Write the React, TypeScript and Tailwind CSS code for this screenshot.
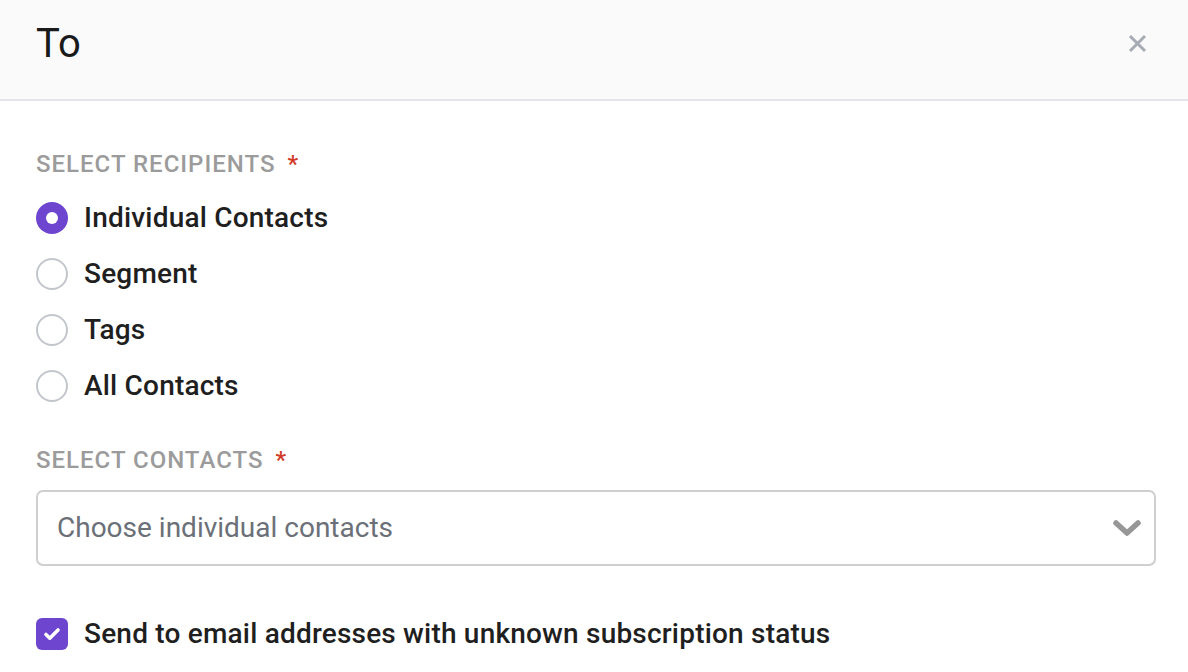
import { useState } from 'react';

const options = ['Individual Contacts', 'Segment', 'Tags', 'All Contacts'];

function FieldLabel({ text }: { text: string }) {
  return (
    <p className="text-[24px] leading-none font-medium tracking-[1px] text-[#9b9b9b] uppercase">
      {text}
      <span className="ml-[12px] text-[#d23a26]">*</span>
    </p>
  );
}

export default function App() {
  const [selected, setSelected] = useState(0);
  const [unknown, setUnknown] = useState(true);

  return (
    <div className="w-[1188px] h-[672px] bg-white font-['Roboto',sans-serif] overflow-hidden">
      {/* header */}
      <div className="h-[101px] bg-[#fafafa] border-b-2 border-[#e6e6ea] flex items-center justify-between pl-[36px] pr-[41px]">
        <h1 className="text-[40px] text-[#1a1a1a] leading-none pb-[12px]">To</h1>
        <button className="text-[#a7abb3] pb-[12px]">
          <svg width="19" height="19" viewBox="0 0 19 19" fill="none" stroke="currentColor" strokeWidth="3" strokeLinecap="butt">
            <path d="M2 2l15 15M17 2L2 17" />
          </svg>
        </button>
      </div>

      <div className="px-[36px] pt-[51px]">
        <FieldLabel text="Select recipients" />

        <div className="mt-[26px] flex flex-col gap-[24px]">
          {options.map((opt, i) => (
            <label key={opt} onClick={() => setSelected(i)} className="flex items-center gap-[16px] cursor-pointer">
              {i === selected ? (
                <span className="w-[32px] h-[32px] rounded-full bg-[#6e45cf] flex items-center justify-center">
                  <span className="w-[12px] h-[12px] rounded-full bg-white" />
                </span>
              ) : (
                <span className="w-[32px] h-[32px] rounded-full border-2 border-[#c3c6cc] bg-white" />
              )}
              <span className="text-[28px] leading-[32px] font-medium tracking-[0.2px] text-[#1f1f1f]">{opt}</span>
            </label>
          ))}
        </div>

        <div className="mt-[46px]">
          <FieldLabel text="Select contacts" />
        </div>

        <div className="mt-[18px] mr-[-4px] h-[76px] border-2 border-[#cfcfcf] rounded-[7px] flex items-center justify-between pl-[19px] pr-[12px]">
          <span className="text-[28px] text-[#6b7078]">Choose individual contacts</span>
          <svg width="30" height="22" viewBox="0 0 30 22" fill="none" stroke="#979797" strokeWidth="5.5" strokeLinecap="round" strokeLinejoin="round">
            <path d="M4 6l11 10L26 6" />
          </svg>
        </div>

        <label onClick={() => setUnknown(!unknown)} className="mt-[52px] flex items-center gap-[16px] cursor-pointer">
          <span className={`w-[32px] h-[32px] rounded-[6px] flex items-center justify-center ${unknown ? 'bg-[#6e45cf]' : 'border-2 border-[#c3c6cc]'}`}>
            {unknown && (
              <svg width="18" height="16" viewBox="0 0 18 16" fill="none" stroke="white" strokeWidth="3.6" strokeLinecap="round" strokeLinejoin="round">
                <path d="M3 8.5l3.8 3.7L15 4" />
              </svg>
            )}
          </span>
          <span className="text-[28px] leading-[32px] font-medium tracking-[0.2px] text-[#1f1f1f]">Send to email addresses with unknown subscription status</span>
        </label>
      </div>
    </div>
  );
}
